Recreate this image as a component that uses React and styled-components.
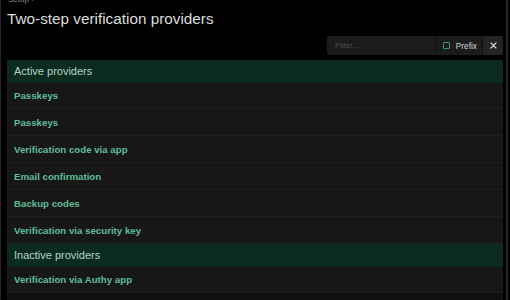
import React from "react";
import styled, { createGlobalStyle } from "styled-components";

const Global = createGlobalStyle`
  html, body {
    margin: 0;
    background: #000;
    overflow: hidden;
  }
  body {
    font-family: "Liberation Sans", Arial, sans-serif;
  }
`;

const Page = styled.div`
  width: 508px;
  height: 300px;
  box-sizing: border-box;
  border-left: 1px solid #262626;
  border-right: 2px solid #262626;
  padding: 0 3px 0 6px;
  display: flex;
  flex-direction: column;
`;

const Crumb = styled.div`
  font-size: 8px;
  line-height: 8px;
  margin-top: -4px;
  color: #8a8a8a;
  padding-left: 1px;
`;

const Title = styled.h1`
  margin: 6px 0 0;
  font-size: 15.3px;
  line-height: 18px;
  font-weight: 400;
  color: #dcdcdc;
`;

const Toolbar = styled.div`
  display: flex;
  justify-content: flex-end;
  margin-top: 8px;
`;

const FilterGroup = styled.div`
  display: flex;
  height: 19px;
  width: 176px;
  border-radius: 3px;
  overflow: hidden;
  background: #1b1b1b;
`;

const FilterInput = styled.input`
  flex: 1;
  min-width: 0;
  border: none;
  outline: none;
  background: #1b1b1b;
  color: #ddd;
  font-family: inherit;
  font-size: 8px;
  padding: 0 8px;
  &::placeholder {
    color: #4e4e4e;
  }
`;

const PrefixToggle = styled.label`
  display: flex;
  align-items: center;
  gap: 6px;
  padding: 0 5px 0 6px;
  border-left: 1px solid #111;
  background: #1c1c1c;
  color: #d6d6d6;
  font-size: 8.3px;
`;

const Check = styled.span`
  width: 5px;
  height: 5px;
  border: 1px solid #3f9470;
  border-radius: 1px;
`;

const ClearButton = styled.button`
  width: 21px;
  border: none;
  border-left: 1px solid #111;
  background: #242424;
  display: flex;
  align-items: center;
  justify-content: center;
  padding: 0;
`;

const Panel = styled.div`
  flex: 1;
  margin-top: 5px;
  border-radius: 2px 2px 0 0;
  overflow: hidden;
  background: #0f0f0f;
`;

const GroupHeader = styled.div`
  height: 22px;
  display: flex;
  align-items: center;
  padding-left: 7px;
  background: #0b2a20;
  border-bottom: 1px solid #0f3226;
  box-sizing: border-box;
  color: #b7d5c7;
  font-size: 11px;
`;

const Row = styled.div`
  height: 27px;
  box-sizing: border-box;
  display: flex;
  align-items: center;
  padding-left: 7px;
  background: #171717;
  border-bottom: 1px solid #1f1f1f;
  color: #5dbf98;
  font-size: 9.7px;
  font-weight: 700;
`;

const groups = [
  {
    title: "Active providers",
    items: [
      "Passkeys",
      "Passkeys",
      "Verification code via app",
      "Email confirmation",
      "Backup codes",
      "Verification via security key",
    ],
  },
  {
    title: "Inactive providers",
    items: ["Verification via Authy app"],
  },
];

export default function App() {
  return (
    <Page>
      <Global />
      <Crumb>Setup ›</Crumb>
      <Title>Two-step verification providers</Title>
      <Toolbar>
        <FilterGroup>
          <FilterInput placeholder="Filter..." />
          <PrefixToggle>
            <Check />
            Prefix
          </PrefixToggle>
          <ClearButton>
            <svg width="7" height="7" viewBox="0 0 7 7">
              <path d="M1 1L6 6M6 1L1 6" stroke="#cfcfcf" strokeWidth="1.2" strokeLinecap="round" />
            </svg>
          </ClearButton>
        </FilterGroup>
      </Toolbar>
      <Panel>
        {groups.map((g) => (
          <React.Fragment key={g.title}>
            <GroupHeader>{g.title}</GroupHeader>
            {g.items.map((item, i) => (
              <Row key={i}>{item}</Row>
            ))}
          </React.Fragment>
        ))}
      </Panel>
    </Page>
  );
}
